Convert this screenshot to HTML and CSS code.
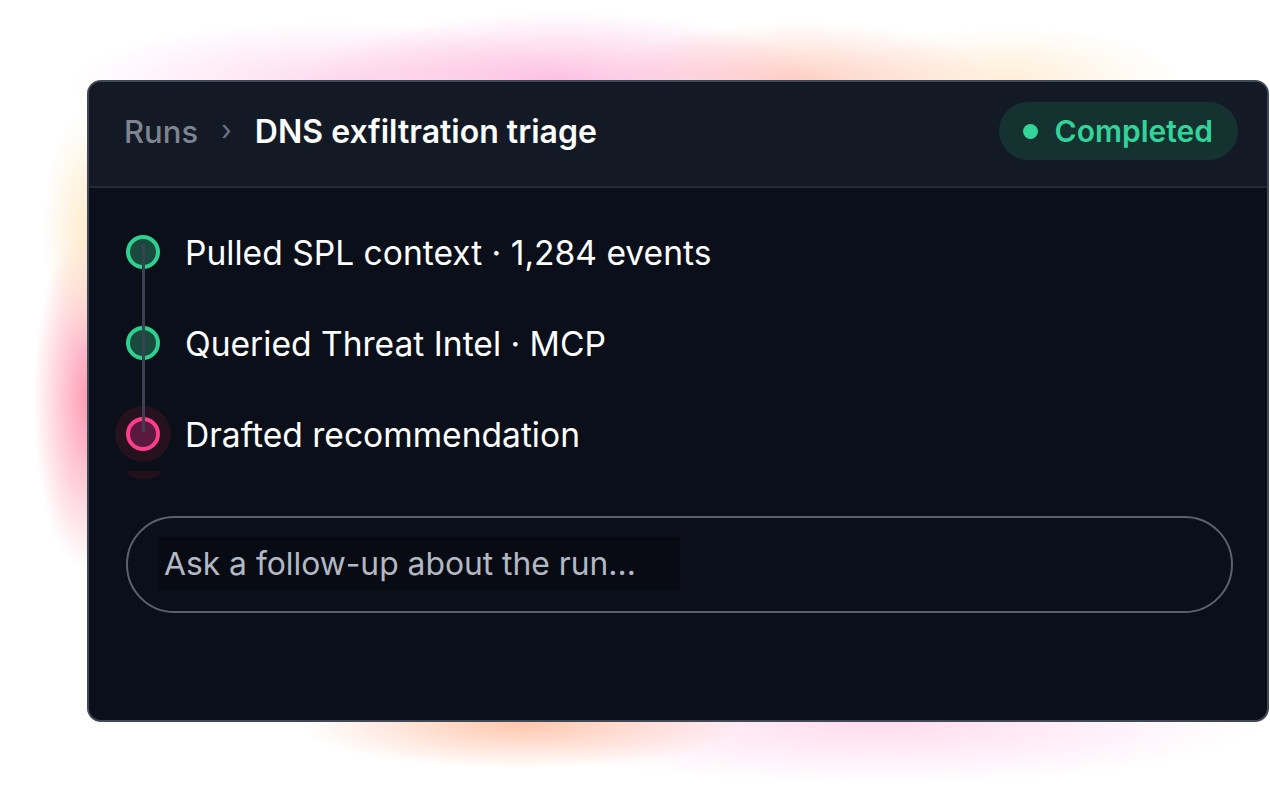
FILE: index.html
```html
<!DOCTYPE html>
<html>

<head>
    <title>DNS exfiltration triage</title>
    <link rel="stylesheet" href="styles.css">
</head>

<body>
    <div class="glow"></div>

    <div class="card">
        <div class="card-header">
            <div class="crumbs">
                <span class="crumb-muted">Runs</span>
                <span class="crumb-sep">›</span>
                <span class="crumb-title">DNS exfiltration triage</span>
            </div>
            <div class="badge">
                <span class="badge-dot"></span>
                <span>Completed</span>
            </div>
        </div>

        <div class="card-body">
            <ul class="steps">
                <li class="step done">
                    <span class="step-dot"></span>
                    <span class="step-text">Pulled SPL context · 1,284 events</span>
                </li>
                <li class="step done">
                    <span class="step-dot"></span>
                    <span class="step-text">Queried Threat Intel · MCP</span>
                </li>
                <li class="step active">
                    <span class="step-dot"></span>
                    <span class="step-text">Drafted recommendation</span>
                </li>
                <div class="step-line"></div>
            </ul>
            <div class="step-tail"></div>

            <div class="composer">
                <div class="composer-pill">
                    <input type="text" class="composer-input" placeholder="Ask a follow-up about the run...">
                </div>
            </div>
        </div>
    </div>
</body>

</html>
```

FILE: styles.css
```css
body {
    font-family: Inter, "Noto Sans", sans-serif;
    background: #ffffff;
    margin: 0;
    padding: 80px 0 0 87px;
    position: relative;
    height: 804px;
    box-sizing: border-box;
    overflow: hidden;
}

.glow {
    position: absolute;
    inset: 0;
    background:
        radial-gradient(ellipse 260px 70px at 560px 82px, rgba(253, 170, 215, 0.75), transparent),
        radial-gradient(ellipse 260px 60px at 330px 82px, rgba(253, 190, 225, 0.55), transparent),
        radial-gradient(ellipse 200px 60px at 800px 82px, rgba(255, 190, 170, 0.75), transparent),
        radial-gradient(ellipse 170px 55px at 1010px 82px, rgba(255, 232, 200, 0.75), transparent),
        radial-gradient(ellipse 45px 120px at 88px 230px, rgba(255, 230, 190, 0.8), transparent),
        radial-gradient(ellipse 55px 170px at 88px 400px, rgba(255, 120, 150, 0.75), transparent),
        radial-gradient(ellipse 220px 45px at 520px 724px, rgba(255, 185, 155, 0.8), transparent),
        radial-gradient(ellipse 380px 60px at 880px 724px, rgba(255, 205, 230, 0.7), transparent);
}

.card {
    position: relative;
    width: 1182px;
    height: 642px;
    box-sizing: border-box;
    border: 2px solid #414957;
    border-radius: 14px;
    background: #0a0f1a;
    overflow: hidden;
}

.card-header {
    display: flex;
    justify-content: space-between;
    align-items: center;
    height: 106px;
    box-sizing: border-box;
    padding: 0 29px 6px 35px;
    background: #131a26;
    border-bottom: 2px solid #232a36;
}

.crumbs {
    display: flex;
    align-items: center;
    gap: 23px;
    font-size: 31px;
}

.crumb-muted {
    color: #7e8591;
    font-weight: 500;
}

.crumb-sep {
    color: #6b7280;
    font-size: 28px;
    padding-bottom: 2px;
}

.crumb-title {
    color: #ffffff;
    font-weight: 600;
    font-size: 32px;
}

.badge {
    display: flex;
    align-items: center;
    gap: 17px;
    height: 58px;
    padding: 0 25px 0 24px;
    border-radius: 29px;
    background: #153230;
    color: #34d399;
    font-size: 30px;
    font-weight: 600;
}

.badge-dot {
    width: 15px;
    height: 15px;
    border-radius: 50%;
    background: #34d399;
}

.card-body {
    padding: 47px 34px 0 37px;
}

.steps {
    list-style: none;
    margin: 0;
    padding: 0;
    position: relative;
    display: flex;
    flex-direction: column;
    gap: 57px;
}

.step {
    display: flex;
    align-items: center;
    gap: 25px;
    height: 34px;
    position: relative;
    z-index: 1;
}

.step-dot {
    width: 34px;
    height: 34px;
    flex-shrink: 0;
    box-sizing: border-box;
    border-radius: 50%;
    border: 4px solid #2fd08f;
    background: #1a4a3d;
}

.step.active .step-dot {
    border-color: #ff3d8b;
    background: #5a1a3f;
    box-shadow: 0 0 0 11px #26121f;
}

.step-text {
    color: #ffffff;
    font-size: 33.6px;
    font-weight: 400;
}

.step-line {
    position: absolute;
    left: 16px;
    top: 9px;
    width: 3px;
    height: 188px;
    background: #3b4150;
    z-index: 2;
}

.step-tail {
    width: 36px;
    height: 8px;
    margin: 20px 0 0 0;
    border-radius: 0 0 18px 18px / 0 0 8px 8px;
    background: #21101b;
}

.composer {
    margin-top: 37px;
}

.composer-pill {
    height: 97px;
    box-sizing: border-box;
    border: 2px solid #5a6270;
    border-radius: 49px;
    padding: 19px 30px;
}

.composer-input {
    width: 522px;
    height: 53px;
    box-sizing: border-box;
    border: none;
    outline: none;
    padding: 0 6px;
    background: #080b13;
    color: #b3b9c3;
    font-family: Inter, "Noto Sans", sans-serif;
    font-size: 31.8px;
    font-weight: 400;
}

.composer-input::placeholder {
    color: #b3b9c3;
}
```
